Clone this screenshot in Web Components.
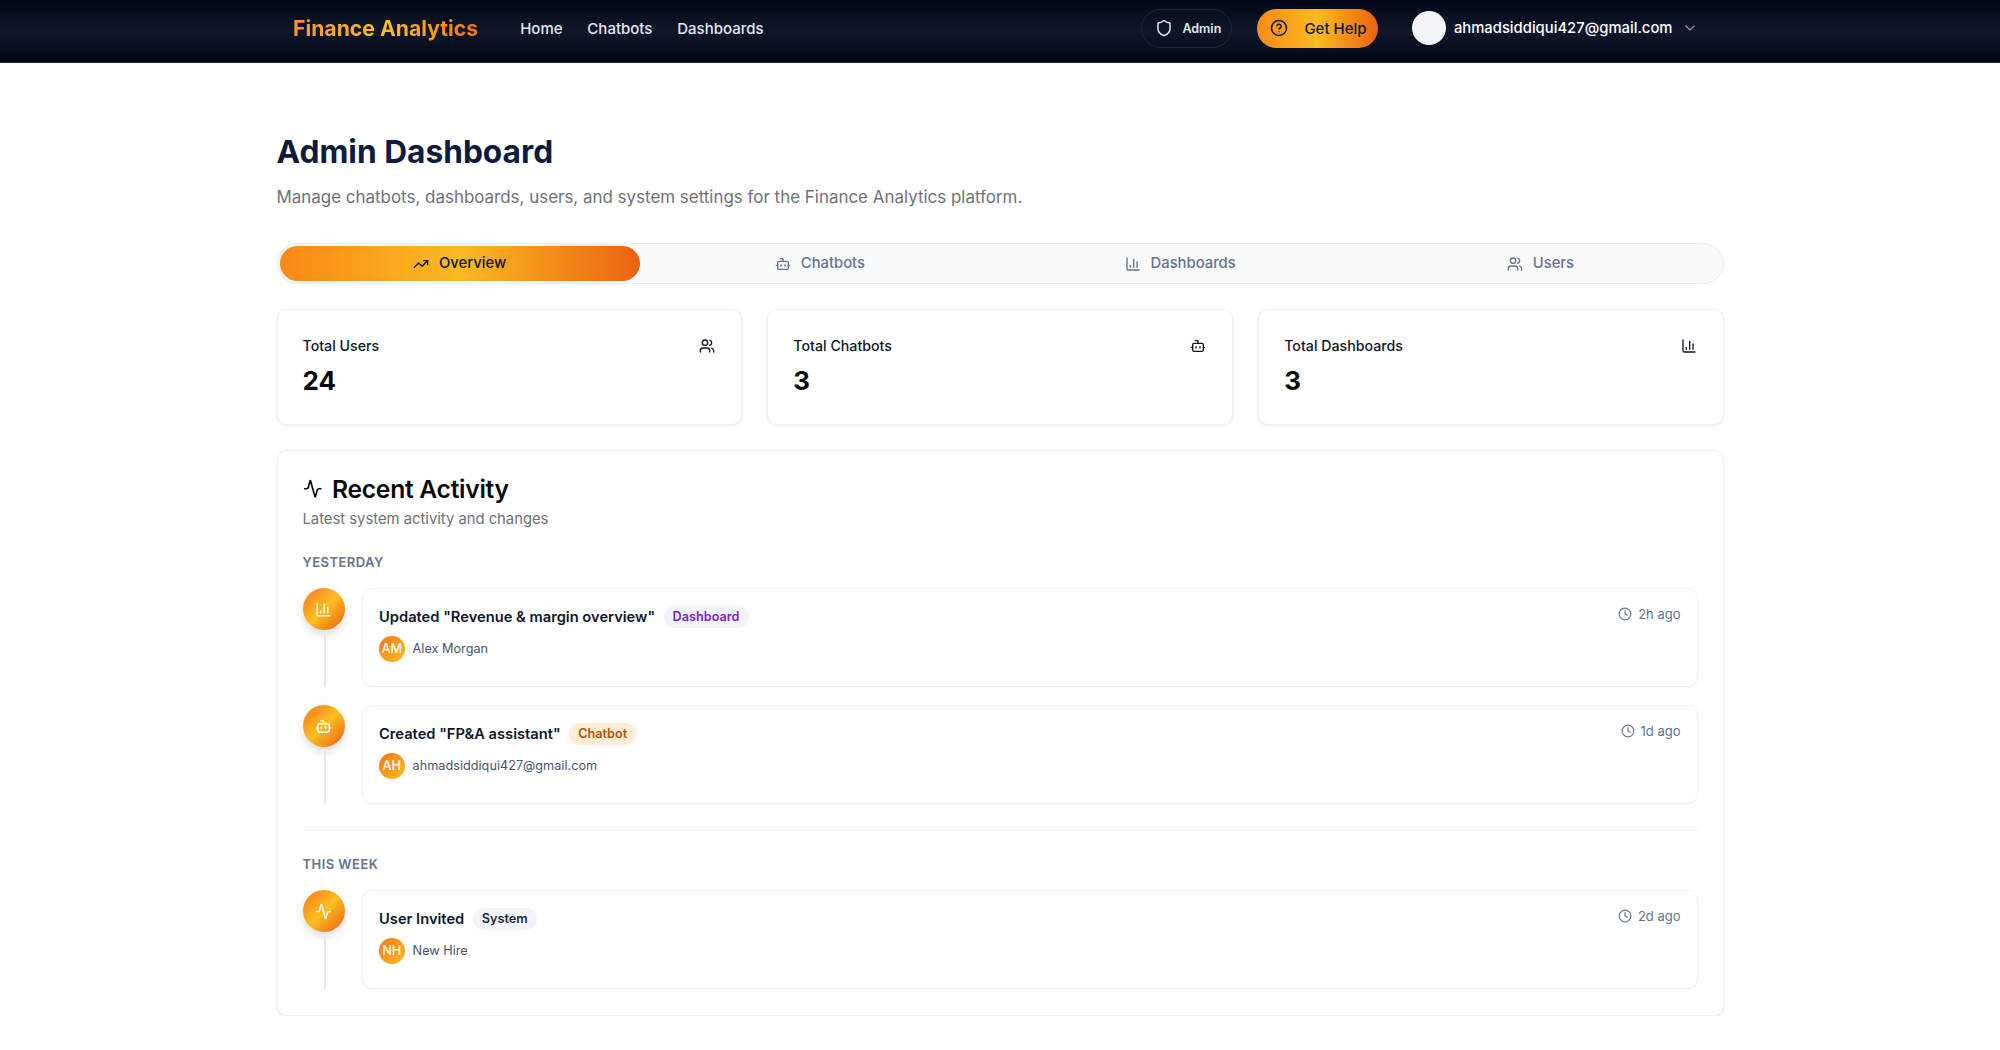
<!DOCTYPE html>
<html lang="en"><head><meta charset="utf-8"><title>Admin Dashboard</title>
<style>
html,body{margin:0;padding:0;background:#fff}
body{font-family:Inter,"Noto Sans",sans-serif;color:#0f172a}
</style></head><body>
<fa-header></fa-header>
<fa-page>
  <fa-title heading="Admin Dashboard" sub="Manage chatbots, dashboards, users, and system settings for the Finance Analytics platform."></fa-title>
  <fa-tabs></fa-tabs>
  <fa-stats>
    <fa-stat label="Total Users" value="24" icon="users"></fa-stat>
    <fa-stat label="Total Chatbots" value="3" icon="bot"></fa-stat>
    <fa-stat label="Total Dashboards" value="3" icon="chart"></fa-stat>
  </fa-stats>
  <fa-activity>
    <fa-group label="Yesterday">
      <fa-item icon="chart" title="Updated &quot;Revenue &amp; margin overview&quot;" badge="Dashboard" kind="dash" initials="AM" who="Alex Morgan" time="2h ago"></fa-item>
      <fa-item icon="bot" title="Created &quot;FP&amp;A assistant&quot;" badge="Chatbot" kind="bot" initials="AH" who="ahmadsiddiqui427@gmail.com" time="1d ago"></fa-item>
    </fa-group>
    <fa-group label="This week" class="second">
      <fa-item icon="activity" title="User Invited" badge="System" kind="sys" initials="NH" who="New Hire" time="2d ago"></fa-item>
    </fa-group>
  </fa-activity>
</fa-page>
<script>
const PATHS={
 users:'<path d="M16 21v-2a4 4 0 0 0-4-4H6a4 4 0 0 0-4 4v2"/><circle cx="9" cy="7" r="4"/><path d="M22 21v-2a4 4 0 0 0-3-3.87"/><path d="M16 3.13a4 4 0 0 1 0 7.75"/>',
 bot:'<path d="M12 8V4H8"/><rect width="16" height="12" x="4" y="8" rx="2"/><path d="M2 14h2"/><path d="M20 14h2"/><path d="M15 13v2"/><path d="M9 13v2"/>',
 chart:'<path d="M3 3v16a2 2 0 0 0 2 2h16"/><path d="M18 17V9"/><path d="M13 17V5"/><path d="M8 17v-3"/>',
 activity:'<path d="M22 12h-2.48a2 2 0 0 0-1.93 1.46l-2.35 8.36a.25.25 0 0 1-.48 0L9.24 2.18a.25.25 0 0 0-.48 0l-2.35 8.36A2 2 0 0 1 4.49 12H2"/>',
 trend:'<polyline points="22 7 13.5 15.5 8.5 10.5 2 17"/><polyline points="16 7 22 7 22 13"/>',
 clock:'<circle cx="12" cy="12" r="10"/><polyline points="12 6 12 12 16 14"/>',
 shield:'<path d="M20 13c0 5-3.5 7.5-7.66 8.95a1 1 0 0 1-.67-.01C7.5 20.5 4 18 4 13V6a1 1 0 0 1 1-1c2 0 4.5-1.2 6.24-2.72a1.17 1.17 0 0 1 1.52 0C14.51 3.81 17 5 19 5a1 1 0 0 1 1 1z"/>',
 help:'<circle cx="12" cy="12" r="10"/><path d="M9.09 9a3 3 0 0 1 5.83 1c0 2-3 3-3 3"/><path d="M12 17h.01"/>',
 chevron:'<path d="m6 9 6 6 6-6"/>'
};
function icon(name,size,stroke=2){return `<svg xmlns="http://www.w3.org/2000/svg" width="${size}" height="${size}" viewBox="0 0 24 24" fill="none" stroke="currentColor" stroke-width="${stroke}" stroke-linecap="round" stroke-linejoin="round" style="display:block;flex:none">${PATHS[name]}</svg>`}
const esc=s=>String(s).replace(/&/g,'&amp;').replace(/</g,'&lt;').replace(/"/g,'&quot;');
function def(tag,render){customElements.define(tag,class extends HTMLElement{connectedCallback(){if(this.shadowRoot)return;const r=this.attachShadow({mode:'open'});r.innerHTML=render(this)}})}
const GRAD='linear-gradient(90deg,#f98a17 0%,#fbba22 50%,#ec6211 100%)';

def('fa-header',()=>`<style>
:host{display:block;height:63px;background:linear-gradient(180deg,#020617 0%,#0f172a 50%,#020617 100%);box-sizing:border-box;border-bottom:1px solid #1e293b;color:#fff}
.in{width:1447px;margin:0 auto;padding:0 26px 6px 16.5px;box-sizing:border-box;height:100%;display:flex;align-items:center;justify-content:space-between}
.l,.r{display:flex;align-items:center}
.logo{font-size:21.2px;font-weight:700;color:transparent;background:linear-gradient(90deg,#fb923c,#fbbf24 50%,#f97316);-webkit-background-clip:text;background-clip:text;margin-right:42px;line-height:28px}
nav{display:flex;gap:24.8px;font-size:15px;font-weight:500;color:#e2e8f0}
.admin{display:flex;align-items:center;gap:9px;height:39px;box-sizing:border-box;width:91px;padding-left:13px;border:1px solid #1e293b;border-radius:999px;font-size:12.5px;font-weight:600;color:#e2e8f0}
.help{display:flex;align-items:center;gap:16px;height:39px;box-sizing:border-box;width:121px;padding-left:13px;margin-left:25px;border-radius:999px;background:${GRAD};font-size:15px;font-weight:500;color:#0f172a}
.av{width:34px;height:34px;border-radius:50%;background:#f1f5f9;margin-left:34px}
.em{margin-left:7.5px;font-size:14.8px;font-weight:500;color:#fff}
.ch{margin-left:9px;color:#94a3b8}
</style><div class="in"><div class="l"><span class="logo">Finance Analytics</span><nav><span>Home</span><span>Chatbots</span><span>Dashboards</span></nav></div>
<div class="r"><div class="admin">${icon('shield',18)}<span>Admin</span></div><div class="help">${icon('help',18)}<span>Get Help</span></div><div class="av"></div><span class="em">ahmadsiddiqui427@gmail.com</span><span class="ch">${icon('chevron',16,1.6)}</span></div></div>`);

def('fa-page',()=>`<style>:host{display:block;width:1447px;margin:0 auto;padding-top:69px}</style><slot></slot>`);

def('fa-title',e=>`<style>:host{display:block}
h1{margin:0;font-size:31.7px;line-height:40px;font-weight:700;color:#0f1b3d}
p{margin:11.5px 0 0;font-size:16.95px;line-height:26px;color:#6f7177}
</style><h1>${esc(e.getAttribute('heading'))}</h1><p>${esc(e.getAttribute('sub'))}</p>`);

def('fa-tabs',()=>{
 const t=[['trend','Overview',1],['bot','Chatbots'],['chart','Dashboards'],['users','Users']];
 return `<style>:host{display:grid;grid-template-columns:repeat(4,1fr);margin-top:33px;height:41px;box-sizing:border-box;padding:2px;border:1px solid #e8ebf3;border-radius:999px;background:#f9fafc}
div{display:flex;align-items:center;justify-content:center;gap:10px;font-size:14.8px;line-height:19px;padding-top:1px;box-sizing:border-box;font-weight:500;color:#64748b;border-radius:999px}
.on{background:${GRAD};color:#0f172a}</style>`+t.map(([i,l,a])=>`<div class="${a?'on':''}">${icon(i,16)}<span>${l}</span></div>`).join('')});

def('fa-stats',()=>`<style>:host{display:grid;grid-template-columns:repeat(3,1fr);gap:25.6px;margin-top:25px}</style><slot></slot>`);
def('fa-stat',e=>`<style>:host{display:block;box-sizing:border-box;height:116px;padding:25px;border:1px solid #eef0f4;border-radius:10px;box-shadow:0 1px 3px rgba(15,23,42,.08);background:#fff}
.t{display:flex;justify-content:space-between;align-items:center;height:22px}
.l{font-size:14.2px;font-weight:500;color:#0f172a}
.i{margin-right:1px}
.v{margin-top:8px;font-size:26px;line-height:32px;font-weight:700;color:#0a0a0a}
</style><div class="t"><span class="l">${esc(e.getAttribute('label'))}</span><span class="i">${icon(e.getAttribute('icon'),16)}</span></div><div class="v">${e.getAttribute('value')}</div>`);

def('fa-activity',()=>`<style>:host{display:block;box-sizing:border-box;margin-top:25px;padding:24px 25px 25px;border:1px solid #eef0f4;border-radius:10px;box-shadow:0 1px 3px rgba(15,23,42,.08);background:#fff;height:566px}
.h{display:flex;align-items:center;gap:10px;height:28px;font-size:24.7px;font-weight:600;color:#0a0a0a;letter-spacing:-.3px}
p{margin:5.5px 0 0;font-size:14.8px;line-height:22px;color:#6f7177}
.b{margin-top:21px;display:block}
</style><div class="h">${icon('activity',19.5)}<span>Recent Activity</span></div><p>Latest system activity and changes</p><div class="b"><slot></slot></div>`);

def('fa-group',e=>`<style>:host{display:block}
:host(.second){margin-top:26px;border-top:1px solid #eef0f4;padding-top:22px}
.g{font-size:13px;line-height:22px;font-weight:600;letter-spacing:.45px;text-transform:uppercase;color:#64748b;margin-bottom:15px}
.l{display:flex;flex-direction:column;gap:18px}
</style><div class="g">${esc(e.getAttribute('label'))}</div><div class="l"><slot></slot></div>`);

def('fa-item',e=>{
 const g=a=>e.getAttribute(a);
 const c={dash:'background:#f1f3fa;color:#7e22ce',bot:'background:#ffedd5;color:#b45309',sys:'background:#f1f5f9;color:#1e293b'}[g('kind')];
 return `<style>:host{display:flex;gap:17px;align-items:stretch}
.rail{width:42px;flex:none;display:flex;flex-direction:column;align-items:center}
.dot{width:42px;height:42px;border-radius:50%;flex:none;display:flex;align-items:center;justify-content:center;color:#fff;background:linear-gradient(135deg,#f97316,#fbbf24 50%,#ea580c);box-shadow:0 4px 8px rgba(15,23,42,.15)}
.line{flex:1;width:2px;background:#e5e8ef;margin-left:2px}
.card{flex:1;height:99px;box-sizing:border-box;padding:16.5px 16px 0 16.5px;border:1px solid #eef0f5;border-radius:10px;background:#fff;box-shadow:0 1px 2px rgba(15,23,42,.03);display:flex;justify-content:space-between}
.top{display:flex;align-items:center;gap:8.5px;height:22px}
.ti{font-size:14.7px;font-weight:600;color:#0f172a}
.bd{font-size:12.7px;font-weight:600;height:22px;line-height:22px;padding:0 9px;border-radius:999px;${c}}
.who{display:flex;align-items:center;gap:8px;margin-top:8.5px;font-size:12.7px;color:#475569}
.av{width:25.6px;height:25.6px;border-radius:50%;background:linear-gradient(135deg,#f97316,#fbbf24);color:#fff;font-size:12.8px;font-weight:500;display:flex;align-items:center;justify-content:center}
.tm{display:flex;align-items:center;gap:6px;height:16px;font-size:13px;color:#64748b}
</style><div class="rail"><div class="dot">${icon(g('icon'),17)}</div><div class="line"></div></div>
<div class="card"><div><div class="top"><span class="ti">${esc(g('title'))}</span><span class="bd">${g('badge')}</span></div><div class="who"><span class="av">${g('initials')}</span><span>${g('who')}</span></div></div><div class="tm">${icon('clock',14)}<span>${g('time')}</span></div></div>`});
</script>
</body></html>
